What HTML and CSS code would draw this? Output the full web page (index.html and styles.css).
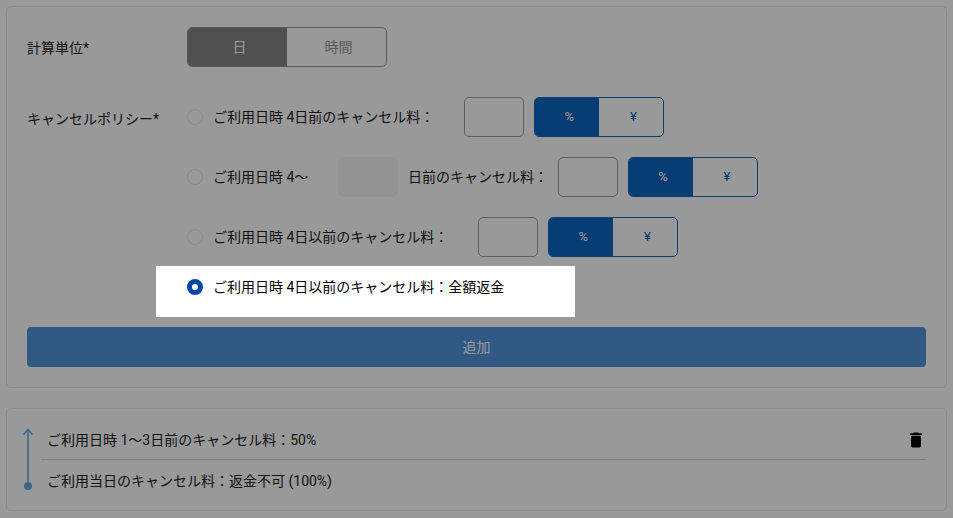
FILE: index.html
```html
<!DOCTYPE html>
<html lang="ja">
<head>
<meta charset="utf-8">
<title>キャンセルポリシー</title>
<link rel="stylesheet" href="styles.css">
</head>
<body>
<div class="card form-card">
  <div class="field unit-field">
    <div class="label unit-label">計算単位*</div>
    <div class="toggle gray unit">
      <div class="seg on">日</div>
      <div class="seg">時間</div>
    </div>
  </div>
  <div class="field">
    <div class="label policy-label">キャンセルポリシー*</div>
    <div class="options">
      <div class="option">
        <span class="radio"></span>
        <span class="text">ご利用日時 4日前のキャンセル料：</span>
        <span class="input amount-1"></span>
        <div class="toggle blue"><div class="seg on">%</div><div class="seg">¥</div></div>
      </div>
      <div class="option">
        <span class="radio"></span>
        <span class="text short">ご利用日時 4〜</span>
        <span class="input disabled"></span>
        <span class="text after">日前のキャンセル料：</span>
        <span class="input amount-1"></span>
        <div class="toggle blue"><div class="seg on">%</div><div class="seg">¥</div></div>
      </div>
      <div class="option">
        <span class="radio"></span>
        <span class="text">ご利用日時 4日以前のキャンセル料：</span>
        <span class="input amount-1"></span>
        <div class="toggle blue"><div class="seg on">%</div><div class="seg">¥</div></div>
      </div>
      <div class="option highlight">
        <span class="radio checked"></span>
        <span class="text">ご利用日時 4日以前のキャンセル料：全額返金</span>
      </div>
    </div>
  </div>
  <div class="add-button">追加</div>
</div>
<div class="card list-card">
  <svg class="timeline" width="12" height="66" viewBox="0 0 12 66" aria-hidden="true">
    <path d="M6 1.500V58" class="tl-line"/>
    <path d="M1.500 6.500L6 1.500L10.500 6.500" class="tl-line"/>
    <circle cx="6" cy="58" r="4" class="tl-dot"/>
  </svg>
  <div class="rows">
    <div class="row first">
      <span>ご利用日時 1〜3日前のキャンセル料：50%</span>
      <svg class="trash" width="20" height="20" viewBox="0 0 24 24" aria-hidden="true"><path d="M6 19c0 1.100.9 2 2 2h8c1.100 0 2-.9 2-2V7H6v12zM19 4h-3.500l-1-1h-5l-1 1H5v2h14V4z"/></svg>
    </div>
    <div class="row">ご利用当日のキャンセル料：返金不可 (100%)</div>
  </div>
</div>
<div class="overlay"></div>
</body>
</html>
```
FILE: styles.css
```css
* { box-sizing: border-box; }
html, body { margin: 0; height: 100%; overflow: hidden; }
body {
  background: #fff;
  padding: 6px 6px 0;
  font-family: Roboto, "Noto Sans CJK JP", sans-serif;
  font-size: 14px;
  line-height: 20px;
  color: #222;
}
.card {
  border: 1px solid #e4e4e4;
  border-radius: 5px;
  background: #fff;
}
.form-card { height: 382px; padding: 20px 20px 0; }
.list-card {
  height: 103px;
  margin-top: 20px;
  padding: 0 20px 0 15px;
  display: flex;
  align-items: flex-start;
}
.field { display: flex; }
.unit-field { align-items: center; margin-bottom: 30px; }
.label { width: 160px; flex: none; }
.unit-label { padding-top: 2px; }
.policy-label { padding-top: 12px; }
.toggle {
  display: flex;
  height: 40px;
  border: 1px solid;
  border-radius: 5px;
  overflow: hidden;
  background: #fff;
}
.toggle .seg {
  display: flex;
  align-items: center;
  justify-content: center;
  height: 100%;
  width: 50%;
  padding-left: 4px;
}
.toggle.gray { width: 200px; border-color: #959595; color: #999; }
.toggle.gray .on { background: #858585; color: #fff; }
.toggle.blue { width: 130px; border-color: #0d64c1; color: #0d64c1; font-size: 13px; }
.toggle.blue .on { background: #0d64c1; color: #fff; }
.options { display: flex; flex-direction: column; gap: 20px; }
.option { display: flex; align-items: center; height: 40px; }
.radio {
  width: 16px;
  height: 16px;
  flex: none;
  border: 1px solid #e4e4e4;
  border-radius: 50%;
  background: #fff;
  margin-right: 10px;
}
.radio.checked { border: 5px solid #0047a5; }
.text { white-space: nowrap; }
.short { width: 125px; }
.after { margin: 0 10px; }
.input {
  display: block;
  width: 60px;
  height: 40px;
  flex: none;
  border: 1px solid #a0a0a0;
  border-radius: 5px;
  background: #fff;
}
.input.amount-1 { margin: 0 10px 0 30px; }
.after + .input.amount-1 { margin-left: 0; }
.input.disabled { background: #f3f3f3; border-color: #f3f3f3; }
.highlight {
  position: relative;
  z-index: 20;
  width: 419px;
  height: 51px;
  margin: -11px 0 0 -31px;
  padding: 0 0 9px 31px;
  background: #fff;
  color: #000;
}
.add-button {
  height: 40px;
  margin-top: 10px;
  border-radius: 4px;
  background: #5096dc;
  color: #fff;
  display: flex;
  align-items: center;
  justify-content: center;
}
.timeline { flex: none; margin-top: 19px; margin-right: 13px; }
.tl-line { fill: none; stroke: #64a8ea; stroke-width: 1.500; }
.tl-dot { fill: #64a8ea; }
.rows { flex: 1; margin-top: 10px; margin-left: -6px; }
.row {
  height: 41px;
  padding-left: 6px;
  display: flex;
  align-items: center;
  justify-content: space-between;
}
.row.first { border-bottom: 1px solid #d5d5d5; padding-top: 2px; }
.trash { fill: #000; }
.overlay {
  position: fixed;
  inset: 0;
  z-index: 10;
  background: rgba(0, 0, 0, 0.4);
}
```
